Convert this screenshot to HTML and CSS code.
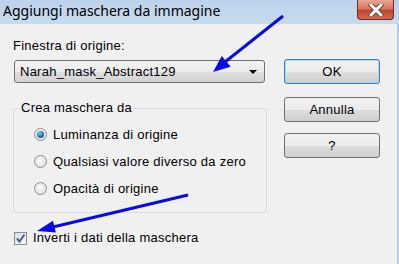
FILE: index.html
```html
<!DOCTYPE html>
<html lang="it">
<head>
  <meta charset="UTF-8" />
  <title>Aggiungi maschera da immagine</title>
  <link rel="stylesheet" href="styles.css">
</head>
<body>
  <div class="window">
    <div class="titlebar">
      <span class="title">Aggiungi maschera da immagine</span>
      <div class="close">
        <svg width="20" height="12" viewBox="0 0 20 12">
          <path d="M5 1 L15 11 M15 1 L5 11" stroke="#5a4a48" stroke-width="5" stroke-linecap="round"/>
          <path d="M5 1 L15 11 M15 1 L5 11" stroke="#fff" stroke-width="3" stroke-linecap="round"/>
        </svg>
      </div>
    </div>

    <div class="content">
      <div class="main">
        <div class="label">Finestra di origine:</div>
        <div class="select">
          <span>Narah_mask_Abstract129</span>
          <span class="caret"></span>
        </div>

        <fieldset class="group">
          <legend>Crea maschera da</legend>
          <div class="radio-row"><span class="radio checked"></span>Luminanza di origine</div>
          <div class="radio-row"><span class="radio"></span>Qualsiasi valore diverso da zero</div>
          <div class="radio-row"><span class="radio"></span>Opacità di origine</div>
        </fieldset>

        <div class="check-row">
          <span class="checkbox">
            <svg width="11" height="11" viewBox="0 0 11 11">
              <path d="M2 5.5 L4.5 8.5 L9.5 1.5" fill="none" stroke="#4a5d94" stroke-width="2"/>
            </svg>
          </span>
          Inverti i dati della maschera
        </div>
      </div>

      <div class="buttons">
        <div class="btn default">OK</div>
        <div class="btn annulla">Annulla</div>
        <div class="btn help">?</div>
      </div>
    </div>

    <svg class="arrows" width="399" height="264">
      <line x1="283" y1="16" x2="225" y2="62" stroke="#0a0ae6" stroke-width="3"/>
      <polygon points="213,72 230.6,66.7 221.8,55.9" fill="#0a0ae6"/>
      <line x1="188" y1="195" x2="53" y2="227" stroke="#0a0ae6" stroke-width="3"/>
      <polygon points="37,231 55.9,232.4 52.9,220.8" fill="#0a0ae6"/>
    </svg>
  </div>
</body>
</html>
```

FILE: styles.css
```css
body {
  margin: 0;
  background: #f0f0f0;
}
.window {
  position: relative;
  width: 399px;
  height: 264px;
  overflow: hidden;
  background: #f0f0f0;
  font-family: "Liberation Sans", Arial, sans-serif;
  font-size: 13px;
  letter-spacing: 0.25px;
  color: #000;
}

.titlebar {
  height: 24px;
  display: flex;
  justify-content: space-between;
  align-items: flex-start;
  background: linear-gradient(#bdd3eb, #c8daee);
}
.title {
  font-family: "Noto Sans", sans-serif;
  font-size: 14px;
  letter-spacing: 0;
  line-height: 22px;
  padding-left: 3px;
}
.close {
  width: 35px;
  height: 19px;
  margin-right: 5px;
  border: 1px solid #6b2c22;
  border-top: none;
  border-radius: 0 0 4px 4px;
  background: linear-gradient(#e7a597 0%, #d8785f 45%, #c4452c 55%, #cf6a4e 100%);
  display: flex;
  align-items: center;
  justify-content: center;
}

.content {
  display: flex;
  height: 240px;
  border-right: 2px solid #b2cde9;
}
.main {
  width: 254px;
  margin-left: 13px;
}
.label {
  margin-top: 15px;
  line-height: 14px;
}
.select {
  margin-top: 7px;
  margin-left: 1px;
  height: 21px;
  border: 1px solid #707070;
  border-radius: 3px;
  background: linear-gradient(#f3f3f3 0%, #ececec 50%, #dfdfdf 51%, #d2d2d2 100%);
  display: flex;
  align-items: center;
  justify-content: space-between;
  padding-left: 5px;
  width: 244px;
}
.caret {
  width: 0;
  height: 0;
  border-left: 4px solid transparent;
  border-right: 4px solid transparent;
  border-top: 4px solid #000;
  margin-right: 7px;
}

.group {
  margin: 18px 0 0;
  padding: 6px 6px 10px;
  border: 1px solid #d5dfe5;
  border-radius: 3px;
}
.group legend {
  padding: 0 1px;
  line-height: 14px;
}
.radio-row {
  height: 27px;
  display: flex;
  align-items: center;
  margin-left: 14px;
}
.radio {
  width: 11px;
  height: 11px;
  border: 1px solid #8e8f8f;
  border-radius: 50%;
  background: radial-gradient(circle at 45% 40%, #fafafa, #d9d9d9);
  margin-right: 6px;
  position: relative;
}
.radio.checked::after {
  content: "";
  position: absolute;
  left: 2px;
  top: 2px;
  width: 7px;
  height: 7px;
  border-radius: 50%;
  background: radial-gradient(circle at 40% 35%, #8ed0f5, #1f6fa8 55%, #0d3d6a);
}

.check-row {
  margin-top: 18px;
  margin-left: 1px;
  display: flex;
  align-items: center;
  line-height: 14px;
}
.checkbox {
  width: 11px;
  height: 11px;
  border: 1px solid #8e8f8f;
  background: linear-gradient(135deg, #dcdcdc, #fbfbfb);
  margin-right: 6px;
  display: flex;
  align-items: center;
  justify-content: center;
}

.buttons {
  margin-left: 17px;
  width: 96px;
  padding-top: 35px;
}
.btn {
  height: 23px;
  border: 1px solid #707070;
  border-radius: 3px;
  background: linear-gradient(#f2f2f2 0%, #ebebeb 50%, #dddddd 51%, #cfcfcf 100%);
  text-align: center;
  line-height: 23px;
}
.btn.default {
  border-color: #3c7fb1;
  box-shadow: inset 0 0 0 1px #a6d8f4;
}
.btn.annulla { margin-top: 13px; }
.btn.help { margin-top: 11px; }

.arrows {
  position: absolute;
  left: 0;
  top: 0;
  pointer-events: none;
}
```
